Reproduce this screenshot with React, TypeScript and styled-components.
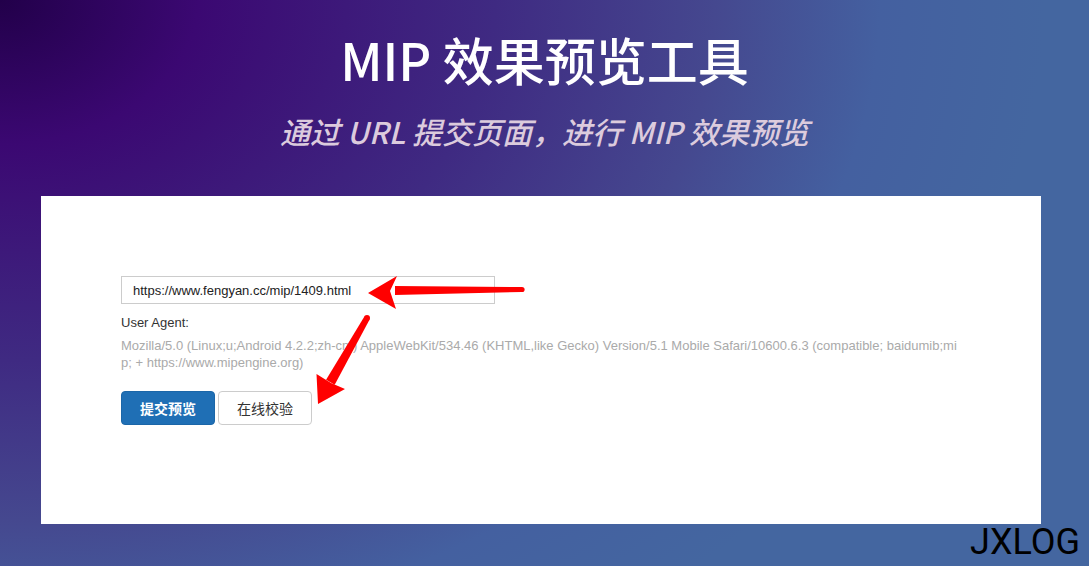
import styled, { createGlobalStyle } from "styled-components";

const GlobalStyle = createGlobalStyle`
  html, body {
    margin: 0;
    padding: 0;
  }
  body {
    font-family: "Liberation Sans", "Noto Sans CJK SC", sans-serif;
  }
`;

const UA =
  "Mozilla/5.0 (Linux;u;Android 4.2.2;zh-cn;) AppleWebKit/534.46 (KHTML,like Gecko) Version/5.1 Mobile Safari/10600.6.3 (compatible; baidumib;mip; + https://www.mipengine.org)";

const App = () => {
  return (
    <StyledPage>
      <GlobalStyle />
      <StyledTitle>MIP 效果预览工具</StyledTitle>
      <StyledSubtitle>通过 URL 提交页面，进行 MIP 效果预览</StyledSubtitle>

      <StyledCard>
        <StyledInput defaultValue="https://www.fengyan.cc/mip/1409.html" />
        <StyledLabel>User Agent:</StyledLabel>
        <StyledUA>{UA}</StyledUA>
        <StyledActions>
          <StyledButton $primary>提交预览</StyledButton>
          <StyledButton>在线校验</StyledButton>
        </StyledActions>

        {/* red arrows drawn over the form */}
        <StyledArrows viewBox="0 0 1000 328" width="1000" height="328">
          <polygon points="481,91 354,90 354,99 481,96" fill="#ff0000" />
          <circle cx="481" cy="93.5" r="2.6" fill="#ff0000" />
          <polygon points="327,97 356,80 349,95 355,113" fill="#ff0000" />

          <polygon points="328.6,123.5 323.4,120.5 285.1,183.8 293.7,188.8" fill="#ff0000" />
          <circle cx="326" cy="122" r="3" fill="#ff0000" />
          <polygon points="277,208 275.5,178 290,187 304,193" fill="#ff0000" />
        </StyledArrows>
      </StyledCard>

      <StyledMark>JXLOG</StyledMark>
    </StyledPage>
  );
};

const StyledPage = styled.div`
  position: relative;
  height: 566px;
  overflow: hidden;
  box-sizing: border-box;
  padding-top: 34px;
  display: flex;
  flex-direction: column;
  align-items: center;
  background: radial-gradient(
    1100px 800px at 0 0,
    #22004a 0%,
    #3b0872 18%,
    #3f2a82 45%,
    #45488f 65%,
    #4460a0 80%,
    #4466a0 95%
  );
`;

const StyledTitle = styled.h1`
  margin: 0;
  font-family: "Noto Sans CJK SC", sans-serif;
  font-weight: 500;
  font-size: 51px;
  line-height: 51px;
  color: #ffffff;
`;

const StyledSubtitle = styled.h2`
  margin: 31px 0 0;
  font-family: "Noto Sans CJK SC", sans-serif;
  font-weight: 500;
  font-style: italic;
  font-size: 30px;
  line-height: 30px;
  color: #dccbdd;
`;

const StyledCard = styled.div`
  position: relative;
  align-self: stretch;
  margin: 50px 48px 0 41px;
  height: 328px;
  box-sizing: border-box;
  padding: 80px;
  background: #ffffff;
  display: flex;
  flex-direction: column;
  align-items: flex-start;
`;

const StyledInput = styled.input`
  width: 374px;
  height: 28px;
  box-sizing: border-box;
  padding: 0 11px;
  border: 1px solid #cccccc;
  outline: none;
  font-family: "Liberation Sans", sans-serif;
  font-size: 13px;
  color: #222222;
`;

const StyledLabel = styled.div`
  margin-top: 12px;
  font-size: 13px;
  line-height: 14px;
  color: #333333;
`;

const StyledUA = styled.div`
  margin-top: 7px;
  width: 840px;
  font-size: 13px;
  line-height: 17px;
  color: #aaaaaa;
  word-break: break-all;
`;

const StyledActions = styled.div`
  margin-top: 20px;
  display: flex;
  gap: 3px;
`;

const StyledButton = styled.button<{ $primary?: boolean }>`
  width: 94px;
  height: 34px;
  border-radius: 4px;
  font-family: "Noto Sans CJK SC", sans-serif;
  font-size: 14px;
  font-weight: ${(p) => (p.$primary ? 700 : 400)};
  color: ${(p) => (p.$primary ? "#ffffff" : "#333333")};
  background: ${(p) => (p.$primary ? "#1f6fb5" : "#ffffff")};
  border: 1px solid ${(p) => (p.$primary ? "#1b66a8" : "#cccccc")};
  cursor: pointer;
`;

const StyledArrows = styled.svg`
  position: absolute;
  left: 0;
  top: 0;
  pointer-events: none;
`;

const StyledMark = styled.div`
  position: absolute;
  right: 9px;
  bottom: 6px;
  font-family: Roboto, sans-serif;
  font-size: 36px;
  line-height: 36px;
  color: #000000;
`;

export default App;
